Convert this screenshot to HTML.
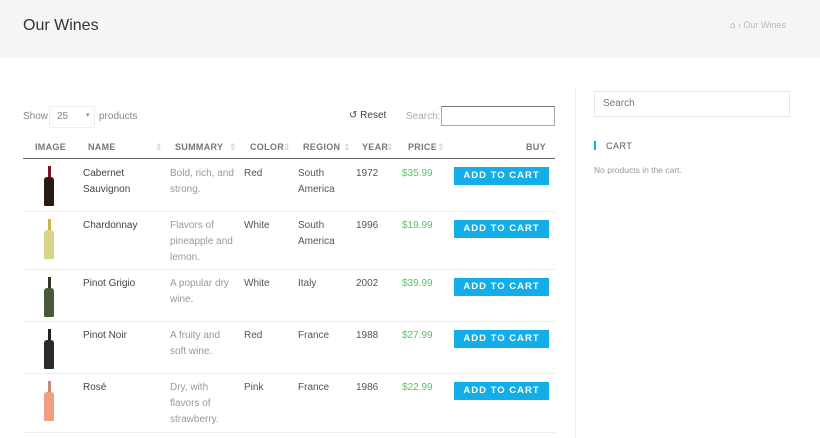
<!DOCTYPE html><html><head><style>
body{margin:0;width:820px;height:438px;overflow:hidden;background:#fff;font-family:"Liberation Sans",sans-serif;font-size:10px;color:#555;position:relative}
.hdr{position:absolute;left:0;top:0;width:820px;height:58px;background:#f5f5f5}
.a{position:absolute;white-space:nowrap}
.btn{position:absolute;left:454px;width:95px;height:18px;background:#13aee8;color:#fff;font-weight:bold;font-size:9.5px;letter-spacing:1px;text-align:center;line-height:18px}
.th{position:absolute;top:142px;font-size:9px;font-weight:bold;color:#777;letter-spacing:.3px}
.s{color:#ccc;font-weight:normal}
.r{position:absolute;left:23px;width:532px;height:1px;background:#eee}
.t{line-height:16px;margin-top:1px}
.g{color:#5fbe6a}
.m{color:#999}
.b{position:absolute;left:44px;width:10px;height:40px}
.b i{display:block;margin:0 auto;width:3px;height:11px}
.b u{display:block;height:29px;border-radius:3px 3px 1px 1px}
</style></head><body>
<div class="hdr"></div>
<div class="a" style="left:23px;top:17px;font-size:16px;color:#333">Our Wines</div>
<div class="a" style="left:730px;top:20px;font-size:9px;color:#bbb"><span style="color:#888">⌂</span> › Our Wines</div>
<div class="a" style="left:575px;top:88px;width:1px;height:350px;background:#eee"></div>
<div class="a" style="left:594px;top:91px;width:194px;height:24px;border:1px solid #e8e8e8"></div>
<div class="a" style="left:603px;top:98px;color:#777">Search</div>
<div class="a" style="left:594px;top:141px;width:2px;height:9px;background:#13aee8"></div>
<div class="a" style="left:606px;top:141px;font-size:9px;color:#555;letter-spacing:.5px">CART</div>
<div class="a" style="left:594px;top:165px;font-size:8.5px;color:#999">No products in the cart.</div>
<div class="a" style="left:23px;top:111px;color:#888">Show</div>
<div class="a" style="left:49px;top:106px;width:44px;height:20px;border:1px solid #eee"></div>
<div class="a" style="left:57px;top:111px;color:#888">25</div>
<div class="a" style="left:86px;top:111px;color:#888;font-size:7px">▾</div>
<div class="a" style="left:99px;top:111px;color:#888">products</div>
<div class="a" style="left:349px;top:110px;color:#444">↺ Reset</div>
<div class="a" style="left:406px;top:111px;color:#aaa">Search:</div>
<div class="a" style="left:441px;top:106px;width:112px;height:18px;border:1px solid #aaa;border-top-color:#777"></div>
<div class="th" style="left:35px">IMAGE</div>
<div class="th" style="left:88px">NAME</div><div class="th s" style="left:155px">⇕</div>
<div class="th" style="left:175px">SUMMARY</div><div class="th s" style="left:229px">⇕</div>
<div class="th" style="left:250px">COLOR</div><div class="th s" style="left:283px">⇕</div>
<div class="th" style="left:303px">REGION</div><div class="th s" style="left:343px">⇕</div>
<div class="th" style="left:362px">YEAR</div><div class="th s" style="left:386px">⇕</div>
<div class="th" style="left:408px">PRICE</div><div class="th s" style="left:437px">⇕</div>
<div class="th" style="left:526px">BUY</div>
<div class="r" style="top:158px;height:1px;background:#666"></div>
<div class="b" style="top:166px"><i style="background:#7a1020"></i><u style="background:#2a1a14"></u></div>
<div class="a t" style="left:83px;top:165px;color:#444">Cabernet<br>Sauvignon</div>
<div class="a t m" style="left:170px;top:165px">Bold, rich, and<br>strong.</div>
<div class="a t" style="left:244px;top:165px">Red</div>
<div class="a t" style="left:298px;top:165px">South<br>America</div>
<div class="a t" style="left:356px;top:165px">1972</div>
<div class="a t g" style="left:402px;top:165px">$35.99</div>
<div class="btn" style="top:167px">ADD TO CART</div>
<div class="r" style="top:211px"></div>
<div class="b" style="top:219px"><i style="background:#c9b840"></i><u style="background:#d8d48a"></u></div>
<div class="a t" style="left:83px;top:217px;color:#444">Chardonnay</div>
<div class="a t m" style="left:170px;top:217px">Flavors of<br>pineapple and<br>lemon.</div>
<div class="a t" style="left:244px;top:217px">White</div>
<div class="a t" style="left:298px;top:217px">South<br>America</div>
<div class="a t" style="left:356px;top:217px">1996</div>
<div class="a t g" style="left:402px;top:217px">$19.99</div>
<div class="btn" style="top:220px">ADD TO CART</div>
<div class="r" style="top:269px"></div>
<div class="b" style="top:277px"><i style="background:#2c3a22"></i><u style="background:#4a5a38"></u></div>
<div class="a t" style="left:83px;top:275px;color:#444">Pinot Grigio</div>
<div class="a t m" style="left:170px;top:275px">A popular dry<br>wine.</div>
<div class="a t" style="left:244px;top:275px">White</div>
<div class="a t" style="left:298px;top:275px">Italy</div>
<div class="a t" style="left:356px;top:275px">2002</div>
<div class="a t g" style="left:402px;top:275px">$39.99</div>
<div class="btn" style="top:278px">ADD TO CART</div>
<div class="r" style="top:321px"></div>
<div class="b" style="top:329px"><i style="background:#222"></i><u style="background:#2a2a2a"></u></div>
<div class="a t" style="left:83px;top:327px;color:#444">Pinot Noir</div>
<div class="a t m" style="left:170px;top:327px">A fruity and<br>soft wine.</div>
<div class="a t" style="left:244px;top:327px">Red</div>
<div class="a t" style="left:298px;top:327px">France</div>
<div class="a t" style="left:356px;top:327px">1988</div>
<div class="a t g" style="left:402px;top:327px">$27.99</div>
<div class="btn" style="top:330px">ADD TO CART</div>
<div class="r" style="top:373px"></div>
<div class="b" style="top:381px"><i style="background:#c88a70"></i><u style="background:#f0a080"></u></div>
<div class="a t" style="left:83px;top:379px;color:#444">Rosé</div>
<div class="a t m" style="left:170px;top:379px">Dry, with<br>flavors of<br>strawberry.</div>
<div class="a t" style="left:244px;top:379px">Pink</div>
<div class="a t" style="left:298px;top:379px">France</div>
<div class="a t" style="left:356px;top:379px">1986</div>
<div class="a t g" style="left:402px;top:379px">$22.99</div>
<div class="btn" style="top:382px">ADD TO CART</div>
<div class="r" style="top:432px"></div>
</body></html>
